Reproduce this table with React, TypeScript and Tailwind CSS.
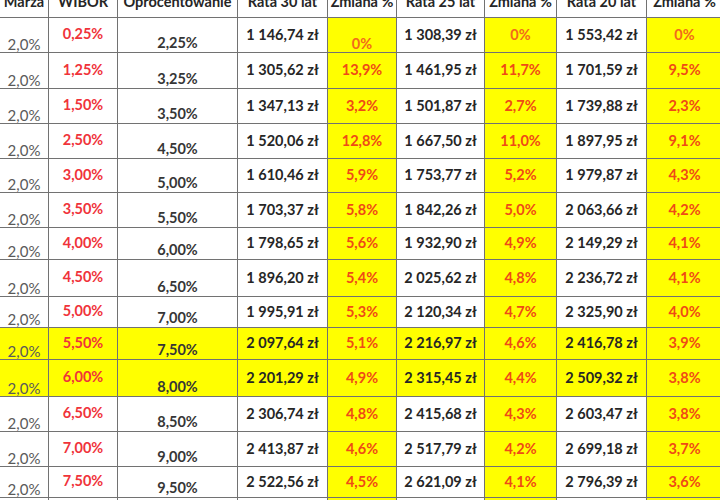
const rows = [
  { h: "h-[35px]", w: "0,25%", o: "2,25%", r30: "1 146,74 zł", z30: "0%", r25: "1 308,39 zł", z25: "0%", r20: "1 553,42 zł", z20: "0%", first: true },
  { h: "h-[36px]", w: "1,25%", o: "3,25%", r30: "1 305,62 zł", z30: "13,9%", r25: "1 461,95 zł", z25: "11,7%", r20: "1 701,59 zł", z20: "9,5%" },
  { h: "h-[35px]", w: "1,50%", o: "3,50%", r30: "1 347,13 zł", z30: "3,2%", r25: "1 501,87 zł", z25: "2,7%", r20: "1 739,88 zł", z20: "2,3%" },
  { h: "h-[35px]", w: "2,50%", o: "4,50%", r30: "1 520,06 zł", z30: "12,8%", r25: "1 667,50 zł", z25: "11,0%", r20: "1 897,95 zł", z20: "9,1%" },
  { h: "h-[34px]", w: "3,00%", o: "5,00%", r30: "1 610,46 zł", z30: "5,9%", r25: "1 753,77 zł", z25: "5,2%", r20: "1 979,87 zł", z20: "4,3%" },
  { h: "h-[35px]", w: "3,50%", o: "5,50%", r30: "1 703,37 zł", z30: "5,8%", r25: "1 842,26 zł", z25: "5,0%", r20: "2 063,66 zł", z20: "4,2%" },
  { h: "h-[32px]", w: "4,00%", o: "6,00%", r30: "1 798,65 zł", z30: "5,6%", r25: "1 932,90 zł", z25: "4,9%", r20: "2 149,29 zł", z20: "4,1%" },
  { h: "h-[37px]", w: "4,50%", o: "6,50%", r30: "1 896,20 zł", z30: "5,4%", r25: "2 025,62 zł", z25: "4,8%", r20: "2 236,72 zł", z20: "4,1%" },
  { h: "h-[31px]", w: "5,00%", o: "7,00%", r30: "1 995,91 zł", z30: "5,3%", r25: "2 120,34 zł", z25: "4,7%", r20: "2 325,90 zł", z20: "4,0%" },
  { h: "h-[32px]", w: "5,50%", o: "7,50%", r30: "2 097,64 zł", z30: "5,1%", r25: "2 216,97 zł", z25: "4,6%", r20: "2 416,78 zł", z20: "3,9%", hl: true },
  { h: "h-[37px]", w: "6,00%", o: "8,00%", r30: "2 201,29 zł", z30: "4,9%", r25: "2 315,45 zł", z25: "4,4%", r20: "2 509,32 zł", z20: "3,8%", hl: true },
  { h: "h-[35px]", w: "6,50%", o: "8,50%", r30: "2 306,74 zł", z30: "4,8%", r25: "2 415,68 zł", z25: "4,3%", r20: "2 603,47 zł", z20: "3,8%" },
  { h: "h-[35px]", w: "7,00%", o: "9,00%", r30: "2 413,87 zł", z30: "4,6%", r25: "2 517,79 zł", z25: "4,2%", r20: "2 699,18 zł", z20: "3,7%" },
  { h: "h-[31px]", w: "7,50%", o: "9,50%", r30: "2 522,56 zł", z30: "4,5%", r25: "2 621,09 zł", z25: "4,1%", r20: "2 796,39 zł", z20: "3,6%" },
];

const grid = "grid grid-cols-[49px_69px_120px_90px_69px_88px_72px_90px_76px]";
const cell = "border-r border-b border-[#727272] flex justify-center";

export default function App() {
  return (
    <div className="w-[720px] h-[500px] overflow-hidden bg-white font-['Lato',sans-serif] text-[14.5px] leading-none">
      <div className="w-[723px] -mt-[12px]">
        {/* header, top half sits above the window */}
        <div className={`${grid} h-[30px] font-bold text-[#262626]`}>
          {["Marża", "WIBOR", "Oprocentowanie", "Rata 30 lat", "Zmiana %", "Rata 25 lat", "Zmiana %", "Rata 20 lat", "Zmiana %"].map((t, i) => (
            <div key={i} className={`${cell} items-center whitespace-nowrap`}>
              {t}
            </div>
          ))}
        </div>

        {rows.map((r, i) => {
          const bg = r.hl ? "bg-[#ffff00]" : "bg-white";
          return (
            <div key={i} className={`${grid} ${r.h} font-bold`}>
              <div className={`${cell} ${bg} items-end pb-0 font-normal text-[15px] text-[#5a5a5a]`}>2,0%</div>
              <div className={`${cell} ${bg} items-center pb-[1px] text-[#f0333a]`}>{r.w}</div>
              <div className={`${cell} ${bg} items-end pb-[2px] text-[#363636]`}>{r.o}</div>
              <div className={`${cell} ${bg} items-center text-[#262626]`}>{r.r30}</div>
              <div className={`${cell} bg-[#ffff00] ${r.first ? "items-end pb-[1px] text-[#f26a1b]" : "items-center text-[#ef4a16]"}`}>{r.z30}</div>
              <div className={`${cell} ${bg} items-center text-[#262626]`}>{r.r25}</div>
              <div className={`${cell} bg-[#ffff00] items-center ${r.first ? "text-[#f26a1b]" : "text-[#ef4a16]"}`}>{r.z25}</div>
              <div className={`${cell} ${bg} items-center text-[#262626]`}>{r.r20}</div>
              <div className={`${cell} bg-[#ffff00] items-center ${r.first ? "text-[#f26a1b]" : "text-[#ef4a16]"}`}>{r.z20}</div>
            </div>
          );
        })}

        {/* next row, only its top edge shows */}
        <div className={`${grid} h-[30px]`}>
          <div className={`${cell} bg-white`} />
          <div className={`${cell} bg-white`} />
          <div className={`${cell} bg-white`} />
          <div className={`${cell} bg-white`} />
          <div className={`${cell} bg-[#ffff00]`} />
          <div className={`${cell} bg-white`} />
          <div className={`${cell} bg-[#ffff00]`} />
          <div className={`${cell} bg-white`} />
          <div className={`${cell} bg-[#ffff00]`} />
        </div>
      </div>
    </div>
  );
}
